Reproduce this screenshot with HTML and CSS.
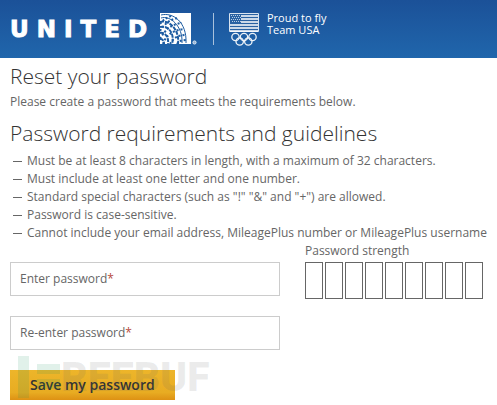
FILE: index.html
```
<!DOCTYPE html>
<html lang="en">
<head>
<meta charset="utf-8">
<meta name="viewport" content="width=device-width, initial-scale=1">
<title>Reset your password</title>
<link rel="stylesheet" href="styles.css">
</head>
<body>
<header class="banner">
  <div class="brand">
    <span class="wordmark">UNITED</span>
    <svg class="globe" viewBox="0 0 37 32" aria-hidden="true">
      <path fill="#fff" d="M0 0h31v31H0z"/>
      <g fill="none" stroke="#1c5ba1">
        <path stroke-width="1" d="M1 2C13-1 27 9 26 30M1 5C10 2 23 13 22 30"/>
        <path stroke-width="2" stroke-dasharray="4 1" d="M0 9c8-3 20 7 18 22M0 14c8-2 15 6 12 17M0 20c5-1 9 4 8 11M0 26c3 0 4 2 4 5"/>
        <path stroke-width="2" stroke-dasharray="2 2" d="M0 18C5 10 11 6 18 5M0 26C6 15 13 11 22 10M3 31c3-9 10-14 21-15M10 31c3-6 8-9 16-9M17 31c2-3 5-4 9-4M0 11c3-4 6-6 11-8"/>
      </g>
      <circle cx="34.5" cy="29.5" r="1.6" fill="#8fb0d4" stroke="#fff" stroke-width=".8"/>
    </svg>
  </div>
  <div class="sponsor">
    <svg class="team" viewBox="0 0 30 33" aria-hidden="true">
      <path fill="#2861a2" stroke="#d8e3ef" d="M.5.5h29v18H.5z"/>
      <path stroke="#fff" stroke-width="1.5" d="M12 3h17M12 6h17M12 9h17M1 12h28M1 15h28M1 18h28"/>
      <path stroke="#b9cde3" stroke-dasharray="1 1" d="M2 2.500h10M3 4.500h9M2 6.500h10M3 8.500h9"/>
      <g fill="none" stroke="#edf3f8" stroke-width="1.300">
        <circle cx="6.500" cy="24" r="3.700"/><circle cx="15" cy="24" r="3.700"/><circle cx="23.500" cy="24" r="3.700"/>
        <circle cx="10.700" cy="28.500" r="3.700"/><circle cx="19.300" cy="28.500" r="3.700"/>
      </g>
    </svg>
    <p class="slogan">Proud to fly<br>Team USA</p>
  </div>
</header>
<main class="page">
  <h1 class="title">Reset your password</h1>
  <p class="intro">Please create a password that meets the requirements below.</p>
  <h2 class="title">Password requirements and guidelines</h2>
  <ul class="rules">
    <li>Must be at least 8 characters in length, with a maximum of 32 characters.</li>
    <li>Must include at least one letter and one number.</li>
    <li>Standard special characters (such as "!" "&amp;" and "+") are allowed.</li>
    <li>Password is case-sensitive.</li>
    <li>Cannot include your email address, MileagePlus number or MileagePlus username</li>
  </ul>
  <form class="form">
    <div class="fields">
      <div class="field">
        <input id="new-password" type="password" required>
        <label for="new-password">Enter password<span class="required">*</span></label>
      </div>
      <div class="field">
        <input id="repeat-password" type="password" required>
        <label for="repeat-password">Re-enter password<span class="required">*</span></label>
      </div>
      <div class="actions">
        <button class="save" type="submit">Save my password</button>
        <div class="watermark" aria-hidden="true">
          <svg class="mark" viewBox="0 0 42 42"><path d="M0 0h11v42H0zM19 8h23v10H19zM19 23h23v10H19z"/></svg>
          <span>REEBUF</span>
        </div>
      </div>
    </div>
    <div class="strength">
      <p>Password strength</p>
      <div class="meter"><i></i><i></i><i></i><i></i><i></i><i></i><i></i><i></i><i></i></div>
    </div>
  </form>
</main>
</body>
</html>
```
FILE: styles.css
```
* { box-sizing: border-box; }

body {
  margin: 0;
  background: #fff;
  color: #666;
  font: 12px/18px "Open Sans", sans-serif;
}

h1, h2, p, ul { margin: 0; padding: 0; }

.banner {
  display: flex;
  align-items: center;
  height: 58px;
  padding: 0 10px;
  background: linear-gradient(#1b5198, #2066ac);
  color: #fff;
}

.brand {
  display: flex;
  align-items: center;
  gap: 5px;
}

.wordmark {
  font: bold 23px/32px "DejaVu Sans", sans-serif;
  letter-spacing: 8px;
  -webkit-text-stroke: 1px #fff;
}

.globe { width: 37px; height: 32px; }

.sponsor {
  display: flex;
  align-items: center;
  gap: 8px;
  height: 32px;
  margin-left: 16px;
  padding-left: 15px;
  border-left: 1px solid #a9c1dc;
}

.team { width: 30px; height: 33px; }

.slogan {
  height: 34px;
  font-size: 11px;
  font-weight: 500;
  line-height: 12px;
}

.page { padding: 4px 10px; }

.title {
  color: #333;
  font-size: 21px;
  font-weight: 300;
  line-height: 28px;
}

.intro { margin: 3px 0 8px; }

.rules {
  margin-top: 5px;
  list-style: none;
}

.rules li {
  display: flex;
  align-items: center;
  gap: 5px;
  padding-left: 3px;
}

.rules li::before {
  width: 9px;
  height: 1px;
  background: #666;
  content: "";
}

.form {
  display: flex;
  gap: 25px;
}

.fields {
  display: grid;
  flex: 0 1 270px;
  gap: 20px;
  padding-top: 20px;
}

.field {
  display: grid;
  align-items: center;
}

.field input,
.field label { grid-area: 1 / 1; }

.field input {
  width: 100%;
  height: 34px;
  padding: 0 10px;
  border: 1px solid #ccc;
  border-radius: 0;
  background: #fff;
  font: inherit;
}

.field label { padding: 0 10px; pointer-events: none; }

.field input:focus + label { visibility: hidden; }

.required { color: #b84a3c; }

.meter {
  display: flex;
  gap: 2px;
  margin-top: 2px;
}

.meter i {
  width: 18px;
  height: 37px;
  border: 1px solid #666;
}

.actions { position: relative; }

.save {
  height: 30px;
  padding: 0 20px;
  border: 0;
  background: linear-gradient(#edb52a, #e8ac22 75%, #dd9114);
  color: #333;
  font: 600 14px/30px "Open Sans", sans-serif;
}

.watermark {
  position: absolute;
  top: -14px;
  left: 8px;
  display: flex;
  align-items: center;
  gap: 1px;
  color: rgb(100 100 100 / 12%);
  font: 900 41px/42px Roboto, sans-serif;
  pointer-events: none;
}

.mark {
  width: 42px;
  height: 42px;
  fill: rgb(20 145 90 / 13%);
}
```
